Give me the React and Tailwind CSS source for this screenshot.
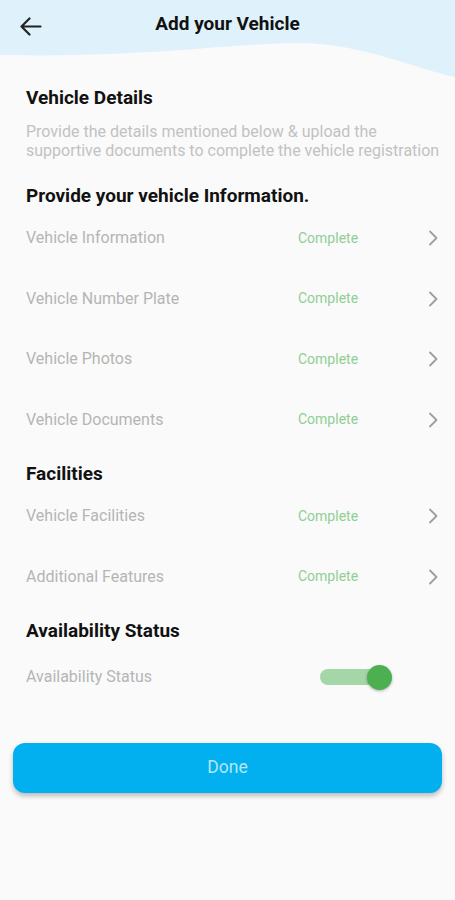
import React from 'react';

const Chevron = () => (
  <svg width="14" height="16" viewBox="0 0 14 16" fill="none" className="shrink-0">
    <polyline points="4,1.5 10.5,8 4,14.5" stroke="#9e9e9e" strokeWidth="1.8" strokeLinecap="round" strokeLinejoin="round" />
  </svg>
);

const Row = ({ label }) => (
  <div className="flex h-[60.5px] items-center pr-[15px]">
    <span className="flex-1 text-[16px] text-[#b5b5b5]">{label}</span>
    <span className="w-[128px] text-[14px] text-[#8fcf93]">Complete</span>
    <Chevron />
  </div>
);

const Heading = ({ children, className = '' }) => (
  <h2 className={`text-[19px] font-bold leading-[24px] text-[#111] ${className}`}>{children}</h2>
);

export default function App() {
  return (
    <div className="min-h-[900px] w-full bg-[#fafafa]" style={{ fontFamily: 'Roboto, "Noto Sans", sans-serif' }}>
      {/* Header with wave */}
      <div className="relative h-[86px]">
        <svg className="absolute inset-0" width="455" height="86" viewBox="0 0 455 86" preserveAspectRatio="none">
          <path d="M0 0 H455 V77 C420 70 360 43 300 43 C230 43 150 58 0 55 Z" fill="#dff1fb" />
        </svg>
        <div className="relative grid grid-cols-[1fr_auto_1fr] pt-[12px]">
          <div className="pl-[19px] pt-[5px]">
            <svg width="24" height="20" viewBox="0 0 24 20" fill="none">
              <path d="M2.5 9.5 H21.5 M10.5 1.5 L2.5 9.5 L10.5 17.5" stroke="#222" strokeWidth="2.2" strokeLinecap="round" strokeLinejoin="round" />
            </svg>
          </div>
          <h1 className="text-[19px] font-bold leading-[24px] text-[#111]">Add your Vehicle</h1>
          <div />
        </div>
      </div>

      <div className="pl-[26px]">
        <Heading>Vehicle Details</Heading>
        <p className="mt-[12px] whitespace-nowrap text-[16px] leading-[19px] text-[#c2c2c2]">
          Provide the details mentioned below &amp; upload the
          <br />
          supportive documents to complete the vehicle registration
        </p>

        <Heading className="mt-[24px]">Provide your vehicle Information.</Heading>
        <Row label="Vehicle Information" />
        <Row label="Vehicle Number Plate" />
        <Row label="Vehicle Photos" />
        <Row label="Vehicle Documents" />

        <Heading className="mt-[12px]">Facilities</Heading>
        <Row label="Vehicle Facilities" />
        <Row label="Additional Features" />

        <Heading className="mt-[12px]">Availability Status</Heading>
        <div className="mt-[4px] flex h-[60.5px] items-center pr-[63px]">
          <span className="flex-1 text-[16px] text-[#b5b5b5]">Availability Status</span>
          <div className="relative flex h-[25px] w-[72px] items-center">
            <div className="h-[16px] w-[70px] rounded-full bg-[#a5d6a7]" />
            <div className="absolute right-0 top-0 h-[25px] w-[25px] rounded-full bg-[#4caf50] shadow-[0_1px_3px_rgba(0,0,0,0.3)]" />
          </div>
        </div>
      </div>

      <div className="mx-[13px] mt-[35px]">
        <button className="flex h-[50px] w-full items-center justify-center rounded-[12px] bg-[#02b0f0] text-[17.5px] text-[#b3e6fa] shadow-[0_3px_5px_rgba(0,0,0,0.25)]">
          Done
        </button>
      </div>
    </div>
  );
}
